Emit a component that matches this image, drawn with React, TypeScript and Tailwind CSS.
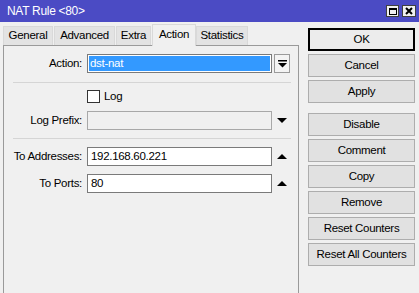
import React from "react";

const font = "font-['Liberation_Sans',Arial,sans-serif] tracking-[-0.3px]";

function Btn({ label, def }: { label: string; def?: boolean }) {
  return (
    <div
      className={
        "h-[23px] w-[107px] flex items-center justify-center text-[11.5px] text-black whitespace-nowrap " +
        (def ? "border-2 border-black bg-[#ececec]" : "border border-[#adadad] bg-[#e1e1e1]")
      }
    >
      {label}
    </div>
  );
}

function DownTri() {
  return (
    <svg width="10" height="6" viewBox="0 0 10 6">
      <polygon points="0,0 10,0 5,5" fill="#000" />
    </svg>
  );
}
function UpTri() {
  return (
    <svg width="10" height="6" viewBox="0 0 10 6">
      <polygon points="0,5 10,5 5,0" fill="#000" />
    </svg>
  );
}

function Row({ label, children, icon }: { label: string; children: React.ReactNode; icon?: React.ReactNode }) {
  return (
    <div className="flex items-center h-[19px]">
      <div className="w-[78px] text-right text-[11.5px] text-black pr-[1px] whitespace-nowrap">{label}</div>
      <div className="ml-[4px] w-[185px] h-[19px]">{children}</div>
      <div className="ml-[1px] w-[17px] h-[19px] flex items-center justify-center">{icon}</div>
    </div>
  );
}

export default function App() {
  const tabs = ["General", "Advanced", "Extra", "Action", "Statistics"];
  const tabW = [50, 61, 35, 44, 52];
  return (
    <div className={"w-[419px] h-[293px] bg-[#f0f0f0] overflow-hidden flex flex-col " + font}>
      <div className="h-[22px] bg-[#4b4bc4] flex items-center justify-between pl-[7px] pr-[3px] shrink-0">
        <span className="text-white text-[12px] whitespace-nowrap">NAT Rule &lt;80&gt;</span>
        <div className="flex gap-[3px]">
          <div className="w-[13px] h-[12px] bg-[#f0f0f0] border border-[#404040] flex items-center justify-center">
            <div className="w-[8px] h-[7px] border border-black border-t-2" />
          </div>
          <div className="w-[14px] h-[12px] bg-[#f0f0f0] border border-[#404040] flex items-center justify-center">
            <svg width="8" height="8" viewBox="0 0 8 8">
              <path d="M1 1 L7 7 M7 1 L1 7" stroke="#000" strokeWidth="2" />
            </svg>
          </div>
        </div>
      </div>
      <div className="flex flex-1 min-h-0">
        <div className="pl-[3px] w-[299px] flex flex-col">
          <div className="h-[23px] flex items-end pt-[2px]">
            {tabs.map((t, i) => {
              const sel = t === "Action";
              return (
                <div
                  key={t}
                  style={{ width: tabW[i] }}
                  className={
                    "flex items-center justify-center text-[11.5px] text-black border-[#d9d9d9] whitespace-nowrap " +
                    (sel
                      ? "h-[22px] bg-[#f0f0f0] border-t border-l border-r relative -mb-[1px] z-10 pb-[2px]"
                      : "h-[19px] bg-[#e3e3e3] border-t border-l border-r mr-[1px]")
                  }
                >
                  {t}
                </div>
              );
            })}
          </div>
          <div className="flex-1 border-l border-r border-t border-[#9a9a9a] bg-[#f0f0f0] pt-[8px] pl-[1px]">
            <Row
              label="Action:"
              icon={
                <div className="ml-[1px] w-[17px] h-[19px] border border-[#9a9a9a] bg-[#f3f3f3] flex items-center justify-center">
                  <svg width="9" height="8" viewBox="0 0 9 8">
                    <rect x="0" y="0" width="9" height="1.5" fill="#000" />
                    <polygon points="0,3 9,3 4.5,7.5" fill="#000" />
                  </svg>
                </div>
              }
            >
              <div className="w-full h-full border border-[#7a7a7a] bg-white p-[1px]">
                <div className="w-full h-full bg-[#3399ff] text-white text-[11.5px] leading-[15px] pl-[1px]">dst-nat</div>
              </div>
            </Row>
            <div className="ml-[8px] mr-[7px] mt-[9px] border-t border-[#d5d5d5]" />
            <div className="mt-[7px] flex items-center h-[13px] pl-[82px]">
              <div className="w-[13px] h-[13px] bg-white border border-[#333]" />
              <span className="ml-[4px] text-[11.5px] text-black">Log</span>
            </div>
            <div className="mt-[8px]">
              <Row label="Log Prefix:" icon={<DownTri />}>
                <div className="w-full h-full border border-[#a8a8a8] bg-[#f0f0f0]" />
              </Row>
            </div>
            <div className="ml-[8px] mr-[7px] mt-[8px] border-t border-[#d5d5d5]" />
            <div className="mt-[8px]">
              <Row label="To Addresses:" icon={<UpTri />}>
                <div className="w-full h-full border border-[#7a7a7a] bg-white text-[11.5px] leading-[17px] pl-[3px]">
                  192.168.60.221
                </div>
              </Row>
            </div>
            <div className="mt-[8px]">
              <Row label="To Ports:" icon={<UpTri />}>
                <div className="w-full h-full border border-[#7a7a7a] bg-white text-[11.5px] leading-[17px] pl-[3px]">
                  80
                </div>
              </Row>
            </div>
          </div>
        </div>
        <div className="ml-[9px] pt-[6px] flex flex-col">
          <Btn label="OK" def />
          <div className="mt-[3px] flex flex-col gap-[3px]">
            <Btn label="Cancel" />
            <Btn label="Apply" />
          </div>
          <div className="mt-[10px] flex flex-col gap-[3px]">
            <Btn label="Disable" />
            <Btn label="Comment" />
            <Btn label="Copy" />
            <Btn label="Remove" />
            <Btn label="Reset Counters" />
            <Btn label="Reset All Counters" />
          </div>
        </div>
      </div>
    </div>
  );
}
